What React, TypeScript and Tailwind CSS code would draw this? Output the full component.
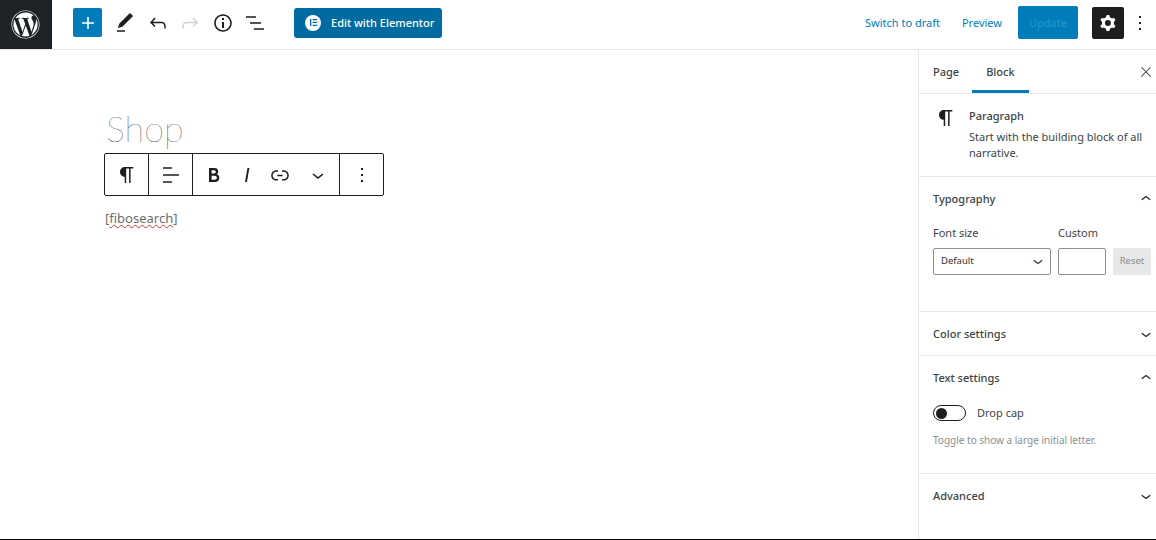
import { FaWordpress } from "react-icons/fa";

const paths = {
  plus: "M18 11.2h-5.2V6h-1.6v5.2H6v1.6h5.2V18h1.6v-5.2H18z",
  edit: "M20.1 5.1L16.9 2 6.2 12.7l-1.3 4.4 4.5-1.3L20.1 5.1zM4 20.8h8v-1.5H4v1.5z",
  undo: "M18.3 11.7c-.6-.6-1.4-.9-2.3-.9H6.7l2.9-3.3-1.1-1-4.5 5L8.5 16l1-1-2.7-2.7H16c.5 0 .9.2 1.3.5 1 1 1 3.4 1 4.5v.3h1.5v-.2c0-1.5 0-4.3-1.5-5.7z",
  redo: "M15.6 6.5l-1.1 1 2.9 3.3H8c-.9 0-1.7.3-2.3.9-1.4 1.5-1.4 4.2-1.4 5.6v.2h1.5v-.3c0-1.1 0-3.5 1-4.5.3-.3.7-.5 1.3-.5h9.2L14.5 15l1.1 1.1 4.6-4.6-4.6-5z",
  info: "M12 3.2c-4.8 0-8.8 3.9-8.8 8.8 0 4.8 3.9 8.8 8.8 8.8 4.8 0 8.8-3.9 8.8-8.8 0-4.8-4-8.8-8.8-8.8zm0 16c-4 0-7.2-3.3-7.2-7.2C4.8 8 8 4.8 12 4.8s7.2 3.3 7.2 7.2c0 4-3.2 7.2-7.2 7.2zM11 17h2v-6h-2v6zm0-8h2V7h-2v2z",
  list: "M3 5.2h10v1.5H3zM7 11.2h11v1.5H7zM11 17.2h10v1.5H11z",
  cog: "M10.289 4.836A1 1 0 0111.275 4h1.306a1 1 0 01.987.836l.244 1.466c.787.26 1.503.679 2.108 1.218l1.393-.522a1 1 0 011.216.437l.653 1.13a1 1 0 01-.23 1.273l-1.148.944a6.025 6.025 0 010 2.435l1.149.946a1 1 0 01.23 1.272l-.653 1.13a1 1 0 01-1.216.437l-1.394-.522c-.605.54-1.32.958-2.108 1.218l-.244 1.466a1 1 0 01-.987.836h-1.306a1 1 0 01-.986-.836l-.244-1.466a5.995 5.995 0 01-2.108-1.218l-1.394.522a1 1 0 01-1.217-.436l-.653-1.131a1 1 0 01.23-1.272l1.149-.946a6.026 6.026 0 010-2.435l-1.148-.944a1 1 0 01-.23-1.272l.653-1.131a1 1 0 011.217-.437l1.393.522a5.994 5.994 0 012.108-1.218l.244-1.466zM14.929 12a3 3 0 11-6 0 3 3 0 016 0z",
  more: "M13 19h-2v-2h2v2zm0-6h-2v-2h2v2zm0-6h-2V5h2v2z",
  close: "M13 11.8l6.1-6.3-1-1-6.1 6.2-6.1-6.2-1 1 6.1 6.3-6.5 6.7 1 1 6.5-6.6 6.5 6.6 1-1z",
  down: "M17.5 11.6L12 16l-5.5-4.4.9-1.2L12 14l4.5-3.6 1 1.2z",
  up: "M6.5 12.4L12 8l5.5 4.4-.9 1.2L12 10l-4.5 3.6-1-1.2z",
  para: "M18.3 4H9.9v-.1l-.9.2c-2.3.4-4 2.4-4 4.8s1.7 4.4 4 4.8l.7.1V20h1.5V5.5h2.9V20h1.5V5.5h2.7V4z",
  bold: "M14.7 11.3c1-.6 1.5-1.6 1.5-3 0-2.3-1.3-3.4-4-3.4H7v14h5.8c1.4 0 2.5-.3 3.3-1 .8-.7 1.2-1.7 1.2-2.9.1-1.9-.8-3.1-2.6-3.7zm-5.1-4h2.3c.6 0 1.1.1 1.4.4.3.3.5.7.5 1.2s-.2 1-.5 1.2c-.3.3-.8.4-1.4.4H9.6V7.3zm4.6 9c-.4.3-1 .4-1.7.4H9.6v-3.9h2.9c.7 0 1.3.2 1.7.5.4.3.6.8.6 1.5s-.2 1.2-.6 1.5z",
  italic: "M12.5 5L10 19h1.9l2.5-14z",
  link: "M15.6 7.2H14v1.5h1.6c2 0 3.7 1.7 3.7 3.7s-1.7 3.7-3.7 3.7H14v1.5h1.6c2.8 0 5.2-2.3 5.2-5.2 0-2.9-2.3-5.2-5.2-5.2zM4.7 12.4c0-2 1.7-3.7 3.7-3.7H10V7.2H8.4c-2.9 0-5.2 2.3-5.2 5.2 0 2.9 2.3 5.2 5.2 5.2H10v-1.5H8.4c-2 0-3.7-1.7-3.7-3.7zm4.6.9h5.3v-1.5H9.3v1.5z",
  align: "M4 19.8h8.9v-1.5H4v1.5zm8.9-15.6H4v1.5h8.9V4.2zm-8.9 7v1.5h16v-1.5H4z",
};

function Icon({ d, size = 24, className = "" }: { d: string; size?: number; className?: string }) {
  return (
    <svg width={size} height={size} viewBox="0 0 24 24" fill="currentColor" className={className}>
      <path d={d} fillRule="evenodd" />
    </svg>
  );
}

function Panel({ title, open, className = "", children }: { title: string; open?: boolean; className?: string; children?: React.ReactNode }) {
  return (
    <div className={`border-b border-[#e6e6e6] pl-[14px] pr-[5px] ${className}`}>
      <div className="flex h-[44px] items-center justify-between">
        <span className="text-[11px] font-medium text-[#3c434a]">{title}</span>
        <Icon d={open ? paths.up : paths.down} size={20} className="mr-[-5px] text-[#1e1e1e]" />
      </div>
      {children}
    </div>
  );
}

export default function App() {
  return (
    <div className="flex h-[540px] w-[1156px] flex-col overflow-hidden border-b border-black bg-white font-['Noto_Sans',sans-serif] text-[#1e1e1e]">
      {/* Top bar */}
      <header className="flex h-[50px] shrink-0 items-center border-b border-[#e6e6e6] pb-[4px]">
        <div className="mb-[-4px] flex h-[49px] w-[52px] items-center justify-center bg-[#1e2327] pr-[2px] text-white">
          <FaWordpress size={29} />
        </div>
        <div className="ml-[21px] flex h-[29px] w-[29px] items-center justify-center rounded-[2px] bg-[#007cba] text-white">
          <Icon d={paths.plus} size={24} />
        </div>
        <div className="ml-[11px] flex items-center gap-[8.5px]">
          <Icon d={paths.edit} />
          <Icon d={paths.undo} />
          <Icon d={paths.redo} className="text-[#cfd1d3]" />
          <Icon d={paths.info} />
          <Icon d={paths.list} />
        </div>
        <button className="ml-[27px] flex h-[30px] w-[148px] items-center whitespace-nowrap rounded-[3px] bg-[#006ba1] pl-[11px] text-[11px] font-medium text-white">
          <span className="flex h-[16px] w-[16px] items-center justify-center rounded-full bg-white">
            <svg width="7" height="7" viewBox="0 0 8 8" fill="#006ba1">
              <path d="M0 0h1.5v8H0zM3 0h5v1.5H3zM3 3.2h5v1.5H3zM3 6.5h5V8H3z" />
            </svg>
          </span>
          <span className="ml-[10px] mt-[2px]">Edit with Elementor</span>
        </button>
        <div className="ml-auto flex items-center">
          <span className="mt-[2px] text-[11px] text-[#007cba]">Switch to draft</span>
          <span className="ml-[22px] mt-[2px] text-[11px] text-[#007cba]">Preview</span>
          <button className="ml-[16px] h-[33px] w-[60px] rounded-[2px] bg-[#007cba] pt-[1px] text-[11px] text-[#2a97cb]">Update</button>
          <div className="ml-[14px] flex h-[32px] w-[32px] items-center justify-center rounded-[2px] bg-[#1e1e1e] text-white">
            <Icon d={paths.cog} />
          </div>
          <Icon d={paths.more} className="mx-[4px]" />
        </div>
      </header>

      <div className="flex min-h-0 flex-1">
        {/* Editor canvas */}
        <main className="flex-1 pl-[104px] pt-[54px]">
          <h1 className="ml-[2px] mb-[1px] font-['Lato',sans-serif] text-[36px] font-thin leading-[48px] text-[#16232b]">Shop</h1>
          <div className="flex h-[43px] w-[280px] rounded-[2px] border border-[#1e1e1e]">
            <div className="flex w-[44px] items-center justify-center border-r border-[#1e1e1e]">
              <Icon d={paths.para} />
            </div>
            <div className="flex w-[44px] items-center justify-center border-r border-[#1e1e1e]">
              <Icon d={paths.align} />
            </div>
            <div className="flex w-[147px] items-center border-r border-[#1e1e1e] pl-[9px]">
              <Icon d={paths.bold} />
              <Icon d={paths.italic} className="ml-[9px]" />
              <Icon d={paths.link} className="ml-[9px]" />
              <Icon d={paths.down} className="ml-[14px]" />
            </div>
            <div className="flex flex-1 items-center justify-center">
              <Icon d={paths.more} />
            </div>
          </div>
          <p className="ml-[1px] mt-[11px] text-[13px] leading-[22px] text-[#6d6d6d]">
            [<span className="underline decoration-[#d63638] decoration-wavy decoration-1">fibosearch</span>]
          </p>
        </main>

        {/* Settings sidebar */}
        <aside className="w-[238px] shrink-0 border-l border-[#e6e6e6]">
          <div className="flex h-[44px] items-center border-b border-[#e6e6e6] pl-[14px] text-[11px] font-medium text-[#3c434a]">
            <span className="mt-[1px]">Page</span>
            <span className="relative ml-[27px] flex h-[43px] items-center pt-[1px]">
              Block
              <span className="absolute bottom-0 left-[-14px] right-[-14px] h-[3px] bg-[#007cba]" />
            </span>
            <Icon d={paths.close} size={16} className="ml-auto mr-[2px]" />
          </div>
          <div className="flex h-[83px] border-b border-[#e6e6e6] pl-[15px] pt-[12px]">
            <Icon d={paths.para} className="shrink-0 text-[#1e1e1e]" />
            <div className="ml-[11px] pr-[10px] pt-[2px] text-[11px] leading-[16px] text-[#3c434a]">
              <div className="font-medium">Paragraph</div>
              <div className="mt-[5px]">Start with the building block of all narrative.</div>
            </div>
          </div>
          <Panel title="Typography" open className="h-[135px]">
            <div className="mt-[4px] flex text-[11px] text-[#3c434a]">
              <span className="w-[125px]">Font size</span>
              <span>Custom</span>
            </div>
            <div className="mt-[6px] flex">
              <div className="flex h-[27px] w-[118px] shrink-0 items-center justify-between rounded-[2px] border border-[#8c8f94] pl-[7px] pr-[2px] text-[9.5px] text-[#2c3338]">
                <span className="mt-[1px]">Default</span>
                <Icon d={paths.down} size={20} />
              </div>
              <div className="ml-[7px] h-[27px] w-[48px] shrink-0 rounded-[2px] border border-[#8c8f94]" />
              <div className="ml-[7px] flex h-[27px] w-[38px] shrink-0 items-center justify-center rounded-[2px] bg-[#e8e8e8] text-[9.5px] text-[#8a8a8a]">Reset</div>
            </div>
          </Panel>
          <Panel title="Color settings" className="h-[44px]" />
          <Panel title="Text settings" open className="h-[118px]">
            <div className="mt-[5px] flex items-center">
              <div className="flex h-[16px] w-[33px] items-center rounded-full border border-[#1e1e1e] pl-[2px]">
                <span className="h-[11px] w-[11px] rounded-full bg-[#1e1e1e]" />
              </div>
              <span className="ml-[11px] text-[11px] text-[#3c434a]">Drop cap</span>
            </div>
            <p className="mt-[11px] text-[10px] leading-[14px] text-[#8a8f94]">Toggle to show a large initial letter.</p>
          </Panel>
          <div className="pl-[14px] pr-[5px]">
            <div className="flex h-[44px] items-center justify-between">
              <span className="text-[11px] font-medium text-[#3c434a]">Advanced</span>
              <Icon d={paths.down} size={20} className="mr-[-5px]" />
            </div>
          </div>
        </aside>
      </div>
    </div>
  );
}
